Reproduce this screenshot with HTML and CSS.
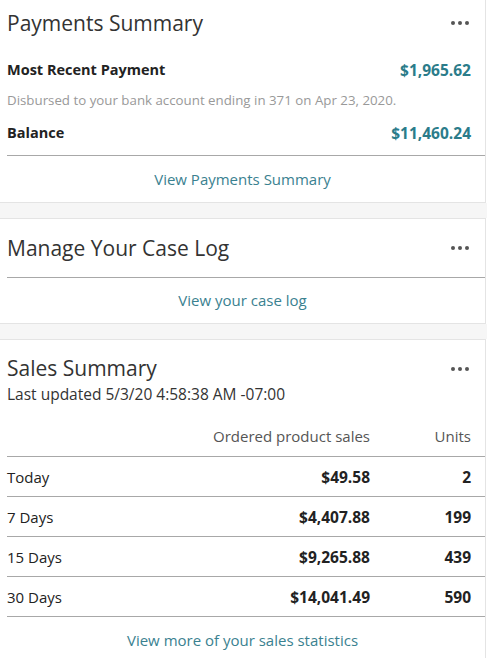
FILE: index.html
```html
<!DOCTYPE html>
<html lang="en">
<head>
  <meta charset="UTF-8" />
  <title>Dashboard</title>
  <link rel="stylesheet" href="styles.css">
</head>
<body>

  <!-- Payments summary -->
  <div class="card">
    <div class="card-head">
      <span class="card-title">Payments Summary</span>
      <svg class="dots" width="18" height="4" viewBox="0 0 18 4"><circle cx="2" cy="2" r="2"/><circle cx="9" cy="2" r="2"/><circle cx="16" cy="2" r="2"/></svg>
    </div>
    <div class="pay-body">
      <div class="pay-row">
        <span>Most Recent Payment</span>
        <span class="money">$1,965.62</span>
      </div>
      <div class="pay-note">Disbursed to your bank account ending in 371 on Apr 23, 2020.</div>
      <div class="pay-row balance">
        <span>Balance</span>
        <span class="money">$11,460.24</span>
      </div>
    </div>
    <a class="card-link">View Payments Summary</a>
  </div>

  <div class="spacer"></div>

  <!-- Case log -->
  <div class="card">
    <div class="card-head tall">
      <span class="card-title">Manage Your Case Log</span>
      <svg class="dots" width="18" height="4" viewBox="0 0 18 4"><circle cx="2" cy="2" r="2"/><circle cx="9" cy="2" r="2"/><circle cx="16" cy="2" r="2"/></svg>
    </div>
    <a class="card-link short">View your case log</a>
  </div>

  <div class="spacer"></div>

  <!-- Sales summary -->
  <div class="card last">
    <div class="sales-head">
      <div>
        <div class="card-title">Sales Summary</div>
        <div class="updated">Last updated 5/3/20 4:58:38 AM -07:00</div>
      </div>
      <svg class="dots" width="18" height="4" viewBox="0 0 18 4"><circle cx="2" cy="2" r="2"/><circle cx="9" cy="2" r="2"/><circle cx="16" cy="2" r="2"/></svg>
    </div>
    <div class="sales-table">
      <div class="sales-row th">
        <span></span>
        <span>Ordered product sales</span>
        <span>Units</span>
      </div>
      <div class="sales-row">
        <span>Today</span>
        <span class="num">$49.58</span>
        <span class="num">2</span>
      </div>
      <div class="sales-row">
        <span>7 Days</span>
        <span class="num">$4,407.88</span>
        <span class="num">199</span>
      </div>
      <div class="sales-row">
        <span>15 Days</span>
        <span class="num">$9,265.88</span>
        <span class="num">439</span>
      </div>
      <div class="sales-row">
        <span>30 Days</span>
        <span class="num">$14,041.49</span>
        <span class="num">590</span>
      </div>
    </div>
    <a class="card-link">View more of your sales statistics</a>
  </div>

</body>
</html>
```

FILE: styles.css
```css
body {
  margin: 0;
  font-family: "Open Sans", Arial, sans-serif;
  color: #222;
  background: #fff;
  width: 487px;
}

/* Cards */
.card {
  background: #fff;
  border-top: 1px solid #e4e4e4;
  border-bottom: 1px solid #e4e4e4;
  border-right: 1px solid #e4e4e4;
  margin-right: 1px;
  padding-left: 7px;
}
.card:first-child {
  border-top: none;
}
.card.last {
  border-bottom: none;
}

.spacer {
  height: 15px;
  background: #f6f6f6;
}

.card-head {
  height: 46px;
  display: flex;
  align-items: center;
  justify-content: space-between;
  padding-right: 16px;
}
.card-head.tall {
  height: 58px;
  border-bottom: 1px solid #a8a8a8;
}

.card-title {
  font-size: 21px;
  line-height: 28px;
  color: #333;
}

.dots {
  fill: #555;
}

/* Payments */
.pay-body {
  padding: 12px 14px 10px 0;
  border-bottom: 1px solid #a8a8a8;
}
.pay-row {
  display: flex;
  justify-content: space-between;
  align-items: center;
  font-size: 14.5px;
  line-height: 24px;
  font-weight: 700;
  color: #222;
}
.pay-row.balance {
  margin-top: 11px;
}
.money {
  font-size: 15.5px;
  color: #2b7c8a;
}
.pay-note {
  margin-top: 8px;
  font-size: 13.3px;
  line-height: 20px;
  color: #999;
}

/* Links */
.card-link {
  display: block;
  height: 46px;
  line-height: 46px;
  text-align: center;
  font-size: 15px;
  color: #3a8190;
  padding-right: 7px;
}
.card-link.short {
  height: 45px;
  line-height: 44px;
}

/* Sales */
.sales-head {
  display: flex;
  justify-content: space-between;
  align-items: flex-start;
  padding: 14px 16px 0 0;
}
.sales-head .dots {
  margin-top: 13px;
}
.updated {
  font-size: 15.5px;
  line-height: 20px;
  margin-top: 2px;
  color: #333;
}

.sales-table {
  margin-top: 22px;
}
.sales-row {
  display: grid;
  grid-template-columns: 1fr 200px 101px;
  align-items: center;
  height: 39px;
  padding-right: 14px;
  border-bottom: 1px solid #a8a8a8;
  font-size: 15px;
  color: #222;
}
.sales-row span + span {
  text-align: right;
}
.sales-row.th {
  height: 30px;
  align-items: start;
  line-height: 20px;
  color: #555;
}
.num {
  font-weight: 700;
  font-size: 15.5px;
}
```
